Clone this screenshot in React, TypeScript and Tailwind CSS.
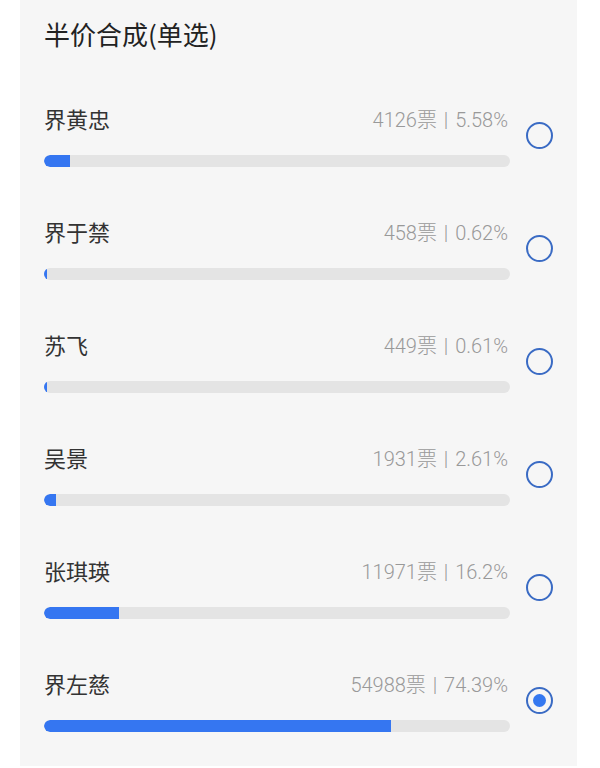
const options = [
  { name: "界黄忠", votes: 4126, pct: "5.58%", value: 5.58 },
  { name: "界于禁", votes: 458, pct: "0.62%", value: 0.62 },
  { name: "苏飞", votes: 449, pct: "0.61%", value: 0.61 },
  { name: "吴景", votes: 1931, pct: "2.61%", value: 2.61 },
  { name: "张琪瑛", votes: 11971, pct: "16.2%", value: 16.2 },
  { name: "界左慈", votes: 54988, pct: "74.39%", value: 74.39 },
];

const selected = 5;

export default function App() {
  return (
    <div className="bg-white" style={{ fontFamily: '"Noto Sans CJK SC", "Noto Sans", sans-serif' }}>
      <div className="ml-5 w-[557px] bg-[#f6f6f6] pl-6 pb-[34px] pt-[18px]">
        {/* title */}
        <h1 className="h-8 text-[26px] leading-8 text-[#222]">半价合成(单选)</h1>

        <div className="mt-[56px] flex flex-col">
          {options.map((o, i) => (
            <div key={o.name} className={`flex ${i === options.length - 1 ? "h-[61px]" : "h-[113px]"}`}>
              <div className="w-[466px]">
                <div className="flex h-7 items-center justify-between">
                  <span className="-mt-1 text-[22px] leading-7 text-[#333]">{o.name}</span>
                  <span
                    className="pr-0.5 text-[20px] font-light text-[#999]"
                    style={{ fontFamily: 'Roboto, "Noto Sans CJK SC", sans-serif' }}
                  >
                    {o.votes}票 <span className="mx-0.5">|</span> {o.pct}
                  </span>
                </div>
                <div className="mt-[21px] h-3 w-full overflow-hidden rounded-full bg-[#e4e4e4]">
                  <div className="h-full rounded-l-full bg-[#3576f1]" style={{ width: `${o.value}%` }} />
                </div>
              </div>
              <div className="ml-4 mt-[16px]">
                <div className="flex h-[27px] w-[27px] items-center justify-center rounded-full border-2 border-[#3a6bc4]">
                  {i === selected && <div className="h-[13px] w-[13px] rounded-full bg-[#3478f0]" />}
                </div>
              </div>
            </div>
          ))}
        </div>
      </div>
    </div>
  );
}
